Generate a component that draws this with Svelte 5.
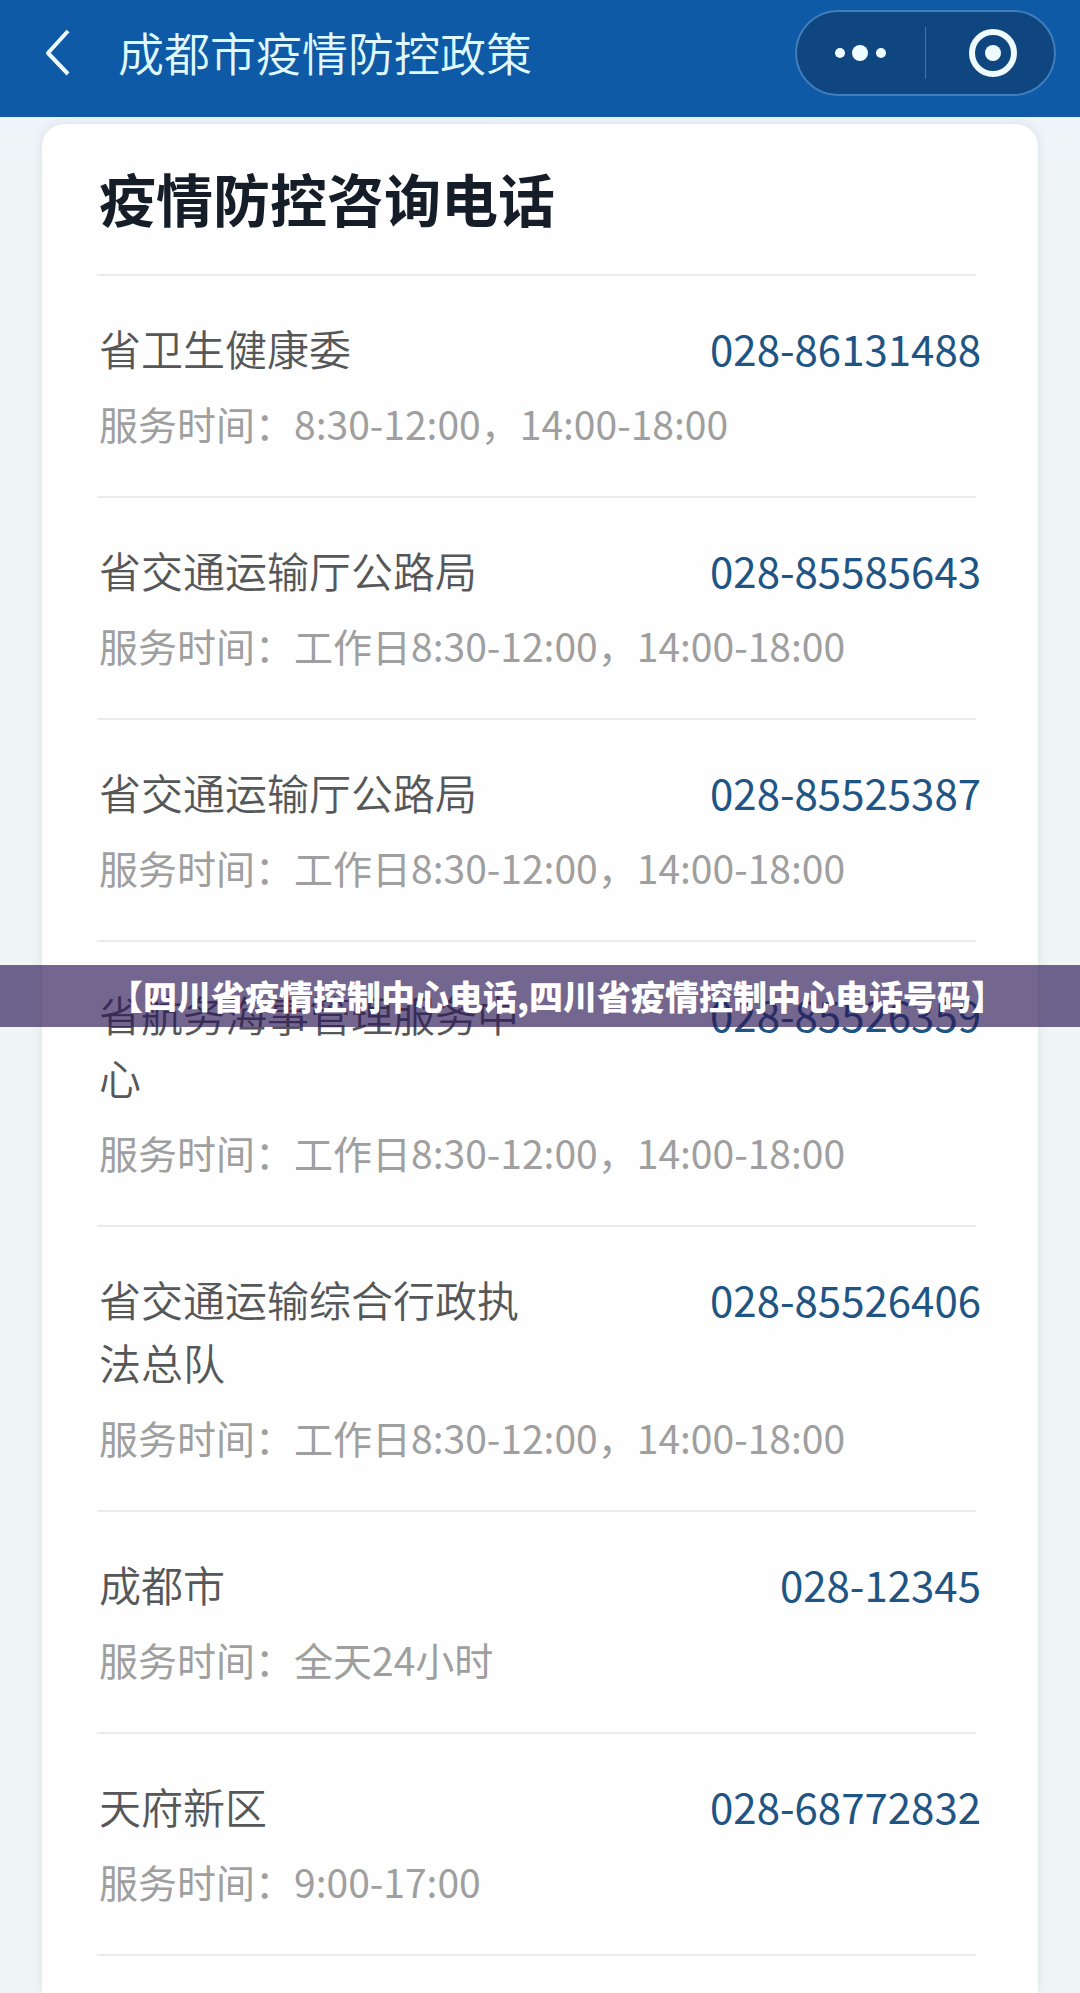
<script>
    const workday = '工作日8:30-12:00，14:00-18:00';

    const contacts = [
        { name: '省卫生健康委', phone: '028-86131488', hours: '8:30-12:00，14:00-18:00' },
        { name: '省交通运输厅公路局', phone: '028-85585643', hours: workday },
        { name: '省交通运输厅公路局', phone: '028-85525387', hours: workday },
        { name: '省航务海事管理服务中心', phone: '028-85526359', hours: workday },
        { name: '省交通运输综合行政执法总队', phone: '028-85526406', hours: workday },
        { name: '成都市', phone: '028-12345', hours: '全天24小时' },
        { name: '天府新区', phone: '028-68772832', hours: '9:00-17:00' }
    ];
</script>

<div class="page">
    <header class="navbar">
        <button class="back" aria-label="返回">
            <svg width="28" height="50" viewBox="0 0 28 50" fill="none" stroke="currentColor" stroke-width="4">
                <path d="M24 3 L4 25 L24 46" stroke-linejoin="round" />
            </svg>
        </button>
        <h1 class="navbar-title">成都市疫情防控政策</h1>
        <div class="capsule">
            <button aria-label="更多">
                <svg width="54" height="50" viewBox="0 0 54 50" fill="currentColor">
                    <circle cx="6" cy="25" r="5" />
                    <circle cx="26" cy="25" r="8" />
                    <circle cx="47" cy="25" r="5" />
                </svg>
            </button>
            <span class="separator"></span>
            <button class="close" aria-label="关闭">
                <svg width="50" height="50" viewBox="0 0 50 50">
                    <circle cx="25" cy="25" r="21" fill="none" stroke="currentColor" stroke-width="6" />
                    <circle cx="25" cy="25" r="8" fill="currentColor" />
                </svg>
            </button>
        </div>
    </header>

    <main class="card">
        <h2 class="card-title">疫情防控咨询电话</h2>
        <ul class="contacts">
            {#each contacts as contact}
                <li>
                    <div class="contact">
                        <div class="contact-head">
                            <span class="name">{contact.name}</span>
                            <a class="phone" href="tel:{contact.phone}">{contact.phone}</a>
                        </div>
                        <p class="hours">服务时间：{contact.hours}</p>
                    </div>
                </li>
            {/each}
        </ul>
    </main>

    <div class="banner">【四川省疫情控制中心电话,四川省疫情控制中心电话号码】</div>
</div>

<style>
    :global(body) {
        background: #f0f6f5;
    }

    .page {
        position: relative;
        display: flex;
        flex-direction: column;
        min-height: 100vh;
        box-sizing: border-box;
        background: linear-gradient(#eff4fb 117px, #f0f6f5 200px);
        font-family: 'Noto Sans CJK SC', 'Noto Sans', sans-serif;
    }

    .navbar {
        display: flex;
        align-items: center;
        box-sizing: border-box;
        height: 117px;
        padding: 0 24px 11px 44px;
        background: #0f5aa6;
        color: #effcff;
    }

    button {
        display: flex;
        align-items: center;
        justify-content: center;
        padding: 0;
        border: none;
        background: none;
        color: inherit;
        cursor: pointer;
    }

    .navbar-title {
        flex: 1;
        margin: 0 0 0 46px;
        padding-bottom: 4px;
        font-size: 46px;
        font-weight: 350;
        line-height: 60px;
        color: #dff9ff;
    }

    .capsule {
        display: flex;
        align-items: center;
        box-sizing: border-box;
        width: 261px;
        height: 86px;
        border: 2px solid #3f7dbd;
        border-radius: 43px;
        background: #10467f;
    }

    .capsule button {
        flex: 1;
        height: 100%;
    }

    .close svg {
        margin-left: 6px;
    }

    .separator {
        width: 1px;
        height: 52px;
        background: #3f74ac;
    }

    .card {
        flex: 1;
        margin: 7px 42px 0;
        border-radius: 22px 22px 0 0;
        background: #fefefe;
        box-shadow: 0 0 12px rgba(40, 80, 70, 0.12);
    }

    .card-title {
        margin: 0;
        padding: 33px 57px 37px;
        font-size: 57px;
        font-weight: 700;
        line-height: 80px;
        color: #141d28;
    }

    .contacts {
        margin: 0;
        padding: 0;
        list-style: none;
    }

    .contacts::before,
    li::after {
        content: '';
        display: block;
        height: 2px;
        margin: 0 62px 0 55px;
        background: #e9eaeb;
    }

    .contact {
        padding: 40px 57px 44px;
    }

    .contact-head {
        display: flex;
        align-items: flex-start;
        justify-content: space-between;
        margin-bottom: 15px;
        font-size: 42px;
        line-height: 63px;
    }

    .name {
        width: 50%;
        font-weight: 350;
        color: #555759;
    }

    .phone {
        color: #1f5584;
        text-decoration: none;
    }

    .hours {
        margin: 0;
        font-size: 39px;
        line-height: 58px;
        color: #9f9f9f;
    }

    .banner {
        position: absolute;
        top: 965px;
        left: 0;
        right: 0;
        background: rgba(43, 23, 85, 0.66);
        color: #fff;
        font-size: 34px;
        font-weight: 900;
        line-height: 62px;
        text-align: center;
        text-indent: 1em;
    }
</style>
